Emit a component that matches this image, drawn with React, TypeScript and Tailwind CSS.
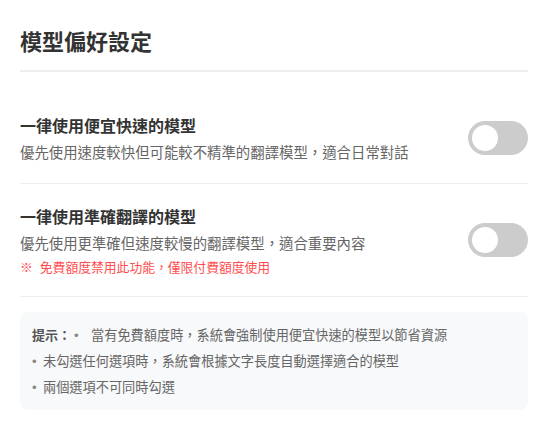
import React from 'react';

interface Opcion {
  id: string;
  titulo: string;
  descripcion: string;
  aviso?: string;
}

const OPCIONES: Opcion[] = [
  {
    id: 'rapido',
    titulo: '一律使用便宜快速的模型',
    descripcion: '優先使用速度較快但可能較不精準的翻譯模型，適合日常對話',
  },
  {
    id: 'preciso',
    titulo: '一律使用準確翻譯的模型',
    descripcion: '優先使用更準確但速度較慢的翻譯模型，適合重要內容',
    aviso: '免費額度禁用此功能，僅限付費額度使用',
  },
];

const TIPS = [
  '未勾選任何選項時，系統會根據文字長度自動選擇適合的模型',
  '兩個選項不可同時勾選',
];

const Toggle: React.FC<{ on: boolean; onClick: () => void }> = ({ on, onClick }) => (
  <button
    onClick={onClick}
    className={`relative w-[60px] h-[34px] rounded-full shrink-0 transition-colors ${on ? 'bg-[#2196f3]' : 'bg-[#ccc]'}`}
  >
    <span
      className={`absolute top-1 left-1 w-[26px] h-[26px] rounded-full bg-white transition-transform ${on ? 'translate-x-[26px]' : ''}`}
    />
  </button>
);

const Bullet: React.FC<{ w: string }> = ({ w }) => (
  <span className={`inline-block ${w} font-['Liberation_Sans',sans-serif] text-[#888]`}>•</span>
);

export default function App() {
  const [activo, setActivo] = React.useState<string | null>(null);

  return (
    <div className="bg-white min-h-screen pl-5 pr-[23px] pt-6 font-['Noto_Sans_CJK_TC',sans-serif]">
      <h2 className="text-[22px] leading-[33px] font-bold text-[#333] pb-[13px] border-b-2 border-[#eee] mb-[21px]">
        模型偏好設定
      </h2>

      {OPCIONES.map((op) => (
        <div key={op.id} className="flex items-center justify-between gap-4 py-5 border-b border-[#eee]">
          <div className="min-w-0">
            <p className="text-base leading-6 font-bold text-[#333] mb-1">{op.titulo}</p>
            <p className="text-[14.4px] leading-[22px] text-[#666]">{op.descripcion}</p>
            {op.aviso && (
              <p className="text-[12.8px] leading-[18px] text-[#ff4d4f] mt-1">
                <span className="mr-[7px]">※</span>
                {op.aviso}
              </p>
            )}
          </div>
          <Toggle
            on={activo === op.id}
            onClick={() => setActivo(activo === op.id ? null : op.id)}
          />
        </div>
      ))}

      <div className="mt-[15px] rounded-lg bg-[#f8f9fa] px-3 py-[10px] text-[13.2px] leading-[25px] text-[#666]">
        <div>
          <strong className="text-[#555] text-[13px]">提示：</strong>
          <span className="inline-block w-[3px]" />
          <Bullet w="w-[17px]" />
          <span>當有免費額度時，系統會強制使用便宜快速的模型以節省資源</span>
        </div>
        {TIPS.map((t) => (
          <div key={t}>
            <Bullet w="w-[11px]" />
            <span>{t}</span>
          </div>
        ))}
      </div>
    </div>
  );
}
